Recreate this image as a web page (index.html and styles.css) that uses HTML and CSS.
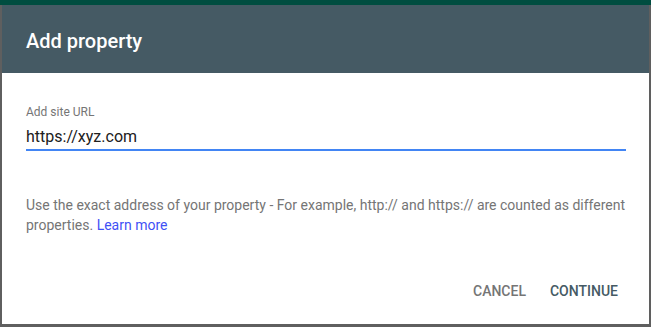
FILE: index.html
```html
<!DOCTYPE html>
<html lang="en">
<head>
<meta charset="utf-8">
<title>Add property</title>
<link rel="stylesheet" href="styles.css">
</head>
<body>
<div class="topbar"></div>
<div class="backdrop">
  <div class="dialog">
    <div class="dialog-header">
      <h1 class="dialog-title">Add property</h1>
    </div>
    <div class="dialog-body">
      <label class="field-label" for="site-url">Add site URL</label>
      <div class="field-input" id="site-url">https://xyz.com</div>
      <p class="help-text">Use the exact address of your property - For example, http:// and https:// are counted as different properties. <a class="link" href="#">Learn more</a></p>
    </div>
    <div class="dialog-actions">
      <button class="btn btn-cancel" type="button">CANCEL</button>
      <button class="btn btn-continue" type="button">CONTINUE</button>
    </div>
  </div>
</div>
</body>
</html>
```
FILE: styles.css
```css
html, body {
  margin: 0;
  padding: 0;
}
body {
  width: 651px;
  height: 327px;
  background: #5f5f5f;
  font-family: Roboto, "Liberation Sans", Arial, sans-serif;
  overflow: hidden;
  display: flex;
  flex-direction: column;
}
.topbar {
  height: 5px;
  background: #004d40;
  flex: none;
}
.backdrop {
  flex: 1;
  display: flex;
  padding: 0 2px 3px 2px;
}
.dialog {
  flex: 1;
  background: #ffffff;
  display: flex;
  flex-direction: column;
}
.dialog-header {
  background: #455a64;
  padding: 22px 24px 18px;
}
.dialog-title {
  margin: 0;
  font-size: 20px;
  line-height: 28px;
  font-weight: 500;
  color: #ffffff;
}
.dialog-body {
  padding: 31px 23px 0 24px;
  display: flex;
  flex-direction: column;
}
.field-label {
  font-size: 12px;
  line-height: 16px;
  color: #757575;
}
.field-input {
  margin-top: 5px;
  font-size: 16px;
  line-height: 24px;
  color: #202020;
  border-bottom: 2px solid #4285f4;
}
.help-text {
  margin: 44px 0 0;
  font-size: 14px;
  line-height: 20px;
  color: #757575;
}
.link {
  color: #3f51f5;
  text-decoration: none;
}
.dialog-actions {
  display: flex;
  justify-content: flex-end;
  gap: 8px;
  padding: 38px 23px 0 24px;
}
.btn {
  background: none;
  border: none;
  padding: 0 8px;
  height: 36px;
  font-family: Roboto, "Liberation Sans", Arial, sans-serif;
  font-size: 14px;
  line-height: 36px;
  font-weight: 500;
  cursor: pointer;
}
.btn-cancel {
  color: #757575;
}
.btn-continue {
  color: #455a64;
}
```
